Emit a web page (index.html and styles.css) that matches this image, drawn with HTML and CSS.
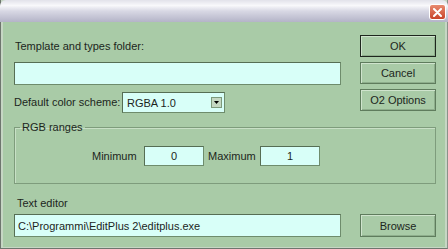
FILE: index.html
```html
<!DOCTYPE html>
<html lang="it">
<head>
    <meta charset="UTF-8">
    <title>Options</title>
    <link rel="stylesheet" href="styles.css">
</head>
<body>
    <div class="window">
        <div class="titlebar">
            <span class="close-btn">
                <svg width="9" height="9" viewBox="0 0 9 9"><path d="M1 1 L8 8 M8 1 L1 8" stroke="#fff" stroke-width="2" stroke-linecap="round"/></svg>
            </span>
        </div>
        <div class="client">
            <div class="top">
                <div class="left-col">
                    <div class="label first-label">Template and types folder:</div>
                    <input class="textbox wide" type="text" value="">
                    <div class="scheme-row">
                        <span class="label scheme-label">Default color scheme:</span>
                        <span class="select">
                            <span class="select-text">RGBA 1.0</span>
                            <span class="select-arrow">
                                <svg width="5" height="3" viewBox="0 0 5 3"><path d="M0 0 H5 L2.5 3 Z" fill="#000"/></svg>
                            </span>
                        </span>
                    </div>
                </div>
                <div class="buttons">
                    <button class="btn default">OK</button>
                    <button class="btn">Cancel</button>
                    <button class="btn">O2 Options</button>
                </div>
            </div>

            <fieldset class="group">
                <legend>RGB ranges</legend>
                <div class="range-row">
                    <span class="range-label">Minimum</span>
                    <input class="textbox small" type="text" value="0">
                    <span class="range-label max">Maximum</span>
                    <input class="textbox small" type="text" value="1">
                </div>
            </fieldset>

            <div class="label editor-label">Text editor</div>
            <div class="editor-row">
                <input class="textbox wide" type="text" value="C:\Programmi\EditPlus 2\editplus.exe">
                <button class="btn">Browse</button>
            </div>
        </div>
    </div>
</body>
</html>
```

FILE: styles.css
```css
body {
    margin: 0;
    font-family: "Liberation Sans", Arial, sans-serif;
    font-size: 11px;
    color: #1c261c;
}

.window {
    width: 448px;
    height: 249px;
    box-sizing: border-box;
    display: flex;
    flex-direction: column;
    background: #c6d6c4;
    border-left: 1px solid #6e766e;
    border-right: 1px solid #8a928a;
    border-bottom: 1px solid #6e766e;
}

.titlebar {
    height: 22px;
    margin: 0 -1px;
    border-radius: 6px 6px 0 0;
    background: linear-gradient(#e2e2ea 0%, #f8f8fb 25%, #d8d8e4 50%, #b4b4c8 100%);
    display: flex;
    justify-content: flex-end;
    align-items: flex-start;
}

.close-btn {
    width: 17px;
    height: 16px;
    margin: 4px 2px 0 0;
    box-sizing: border-box;
    border: 1px solid #fff;
    border-radius: 3px;
    background: linear-gradient(#e88a70, #c8442a);
    display: flex;
    align-items: center;
    justify-content: center;
}

.client {
    flex: 1;
    margin: 0 2px 1px 2px;
    background: #a9cba7;
    padding: 0 9px 0 11px;
}

.top {
    display: flex;
    justify-content: space-between;
    padding-top: 13px;
}

.left-col {
    width: 327px;
}

.label {
    line-height: 13px;
}

.first-label {
    margin: 5px 0 0 1px;
}

.textbox {
    display: block;
    box-sizing: border-box;
    margin: 0;
    border: 1px solid #6e8c6c;
    border-top-color: #566e54;
    border-left-color: #566e54;
    background: #d8fff8;
    font: inherit;
    color: #1c261c;
    outline: none;
}

.wide {
    width: 327px;
    height: 23px;
    padding: 0 3px;
}

.left-col .wide {
    margin-top: 9px;
}

.scheme-row {
    display: flex;
    align-items: center;
    margin-top: 7px;
}

.scheme-label {
    width: 108px;
}

.select {
    width: 103px;
    height: 21px;
    box-sizing: border-box;
    border: 1px solid #6e8c6c;
    border-top-color: #566e54;
    border-left-color: #566e54;
    background: #d8fff8;
    display: flex;
    align-items: center;
    justify-content: space-between;
    padding: 0 2px 0 4px;
}

.select-arrow {
    width: 11px;
    height: 11px;
    box-sizing: border-box;
    border: 1px solid #7d9a7b;
    background: #c4d8c2;
    display: flex;
    align-items: center;
    justify-content: center;
}

.buttons {
    width: 76px;
    display: flex;
    flex-direction: column;
    gap: 5px;
}

.btn {
    height: 22px;
    width: 76px;
    box-sizing: border-box;
    margin: 0;
    padding: 0;
    border: 1px solid #5f7c5d;
    background: #a9cba7;
    box-shadow: inset 1px 1px #cfe4cd, inset -1px -1px #8eae8c;
    font: inherit;
    color: #1c261c;
}

.btn.default {
    border-color: #1e261e;
}

.group {
    margin: 8px 0 0 0;
    padding: 12px 0 17px 0;
    border: 1px solid #7e9c7c;
    box-shadow: inset 1px 1px #c8e0c6;
}

.group legend {
    padding: 0 2px;
    margin-left: 5px;
    line-height: 13px;
}

.range-row {
    display: flex;
    align-items: center;
    padding-left: 77px;
}

.range-label {
    width: 52px;
    line-height: 20px;
}

.range-label.max {
    width: 52px;
    padding-left: 4px;
}

.small {
    width: 60px;
    height: 20px;
    padding: 0;
    text-align: center;
}

.editor-label {
    margin: 13px 0 0 3px;
}

.editor-row {
    display: flex;
    justify-content: space-between;
    margin-top: 4px;
}

.editor-row .btn {
    height: 23px;
}
```
